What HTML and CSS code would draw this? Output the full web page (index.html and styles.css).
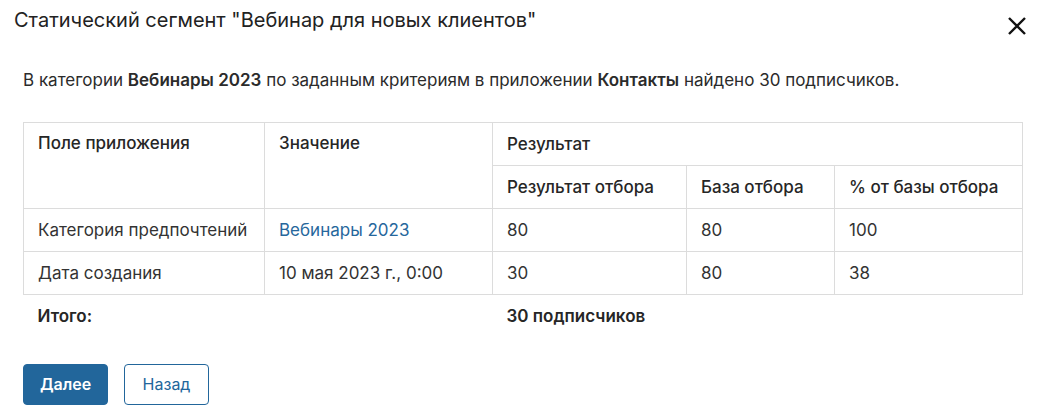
FILE: index.html
```html
<!DOCTYPE html>
<html>

<head>
    <title>Статический сегмент</title>
    <meta name="viewport" content="width=device-width, initial-scale=1">
    <link rel="stylesheet" href="styles.css">
</head>

<body>
    <div class="dialog">
        <div class="dialog-header">
            <span class="dialog-title">Статический сегмент "Вебинар для новых клиентов"</span>
            <button class="close-button" aria-label="Закрыть">
                <svg width="20" height="20" viewBox="0 0 20 20">
                    <path d="M2 2 L18 18 M18 2 L2 18" stroke="#111" stroke-width="2.4" fill="none"/>
                </svg>
            </button>
        </div>

        <div class="dialog-body">
            <p class="summary">В категории <b>Вебинары 2023</b> по заданным критериям в приложении <b>Контакты</b> найдено 30 подписчиков.</p>

            <table class="result-table">
                <colgroup>
                    <col style="width: 241px">
                    <col style="width: 228px">
                    <col style="width: 194px">
                    <col style="width: 148px">
                    <col style="width: 188px">
                </colgroup>
                <thead>
                    <tr>
                        <th rowspan="2" class="top">Поле приложения</th>
                        <th rowspan="2" class="top">Значение</th>
                        <th colspan="3">Результат</th>
                    </tr>
                    <tr>
                        <th>Результат отбора</th>
                        <th>База отбора</th>
                        <th>% от базы отбора</th>
                    </tr>
                </thead>
                <tbody>
                    <tr>
                        <td>Категория предпочтений</td>
                        <td><a href="#" class="link">Вебинары 2023</a></td>
                        <td>80</td>
                        <td>80</td>
                        <td>100</td>
                    </tr>
                    <tr>
                        <td>Дата создания</td>
                        <td>10 мая 2023 г., 0:00</td>
                        <td>30</td>
                        <td>80</td>
                        <td>38</td>
                    </tr>
                </tbody>
                <tfoot>
                    <tr>
                        <td>Итого:</td>
                        <td></td>
                        <td colspan="3">30 подписчиков</td>
                    </tr>
                </tfoot>
            </table>

            <div class="actions">
                <button class="btn btn-primary">Далее</button>
                <button class="btn btn-secondary">Назад</button>
            </div>
        </div>
    </div>
</body>

</html>
```

FILE: styles.css
```css
body {
    font-family: Inter, "Noto Sans", sans-serif;
    margin: 0;
    padding: 0;
    color: #2b2b2b;
    background-color: #fff;
}

.dialog {
    width: 1039px;
}

.dialog-header {
    display: flex;
    justify-content: space-between;
    align-items: flex-start;
    height: 44px;
    padding: 0 12px 0 14px;
}

.dialog-title {
    margin-top: 8px;
    font-size: 20px;
    line-height: 24px;
    color: #222;
}

.close-button {
    display: flex;
    margin-top: 16px;
    padding: 0;
    background-color: transparent;
    border: none;
    cursor: pointer;
}

.dialog-body {
    padding: 0 17px 0 23px;
}

.summary {
    margin: 25px 0 0;
    font-size: 17px;
    line-height: 22px;
}

.summary b {
    font-weight: 600;
}

.result-table {
    width: 999px;
    margin-top: 31px;
    border-collapse: collapse;
    table-layout: fixed;
    font-size: 17px;
}

.result-table th,
.result-table td {
    height: 43px;
    padding: 0 14px;
    border: 1px solid #dcdcdc;
    text-align: left;
    vertical-align: middle;
    box-sizing: border-box;
    white-space: nowrap;
}

.result-table th {
    font-weight: 500;
    color: #262626;
}

.result-table th.top {
    vertical-align: top;
    padding-top: 10px;
}

.result-table td {
    color: #333;
}

.result-table tfoot td {
    border: none;
    height: 42px;
    font-weight: 600;
    color: #262626;
}

.link {
    color: #26679c;
    text-decoration: none;
}

.actions {
    display: flex;
    gap: 16px;
    margin-top: 27px;
}

.btn {
    width: 85px;
    height: 41px;
    border-radius: 4px;
    font-family: Inter, "Noto Sans", sans-serif;
    font-size: 16px;
    cursor: pointer;
}

.btn-primary {
    background-color: #22669b;
    border: 1px solid #22669b;
    color: #fff;
    font-weight: 600;
}

.btn-secondary {
    background-color: #fff;
    border: 1px solid #22669b;
    color: #22669b;
}
```
